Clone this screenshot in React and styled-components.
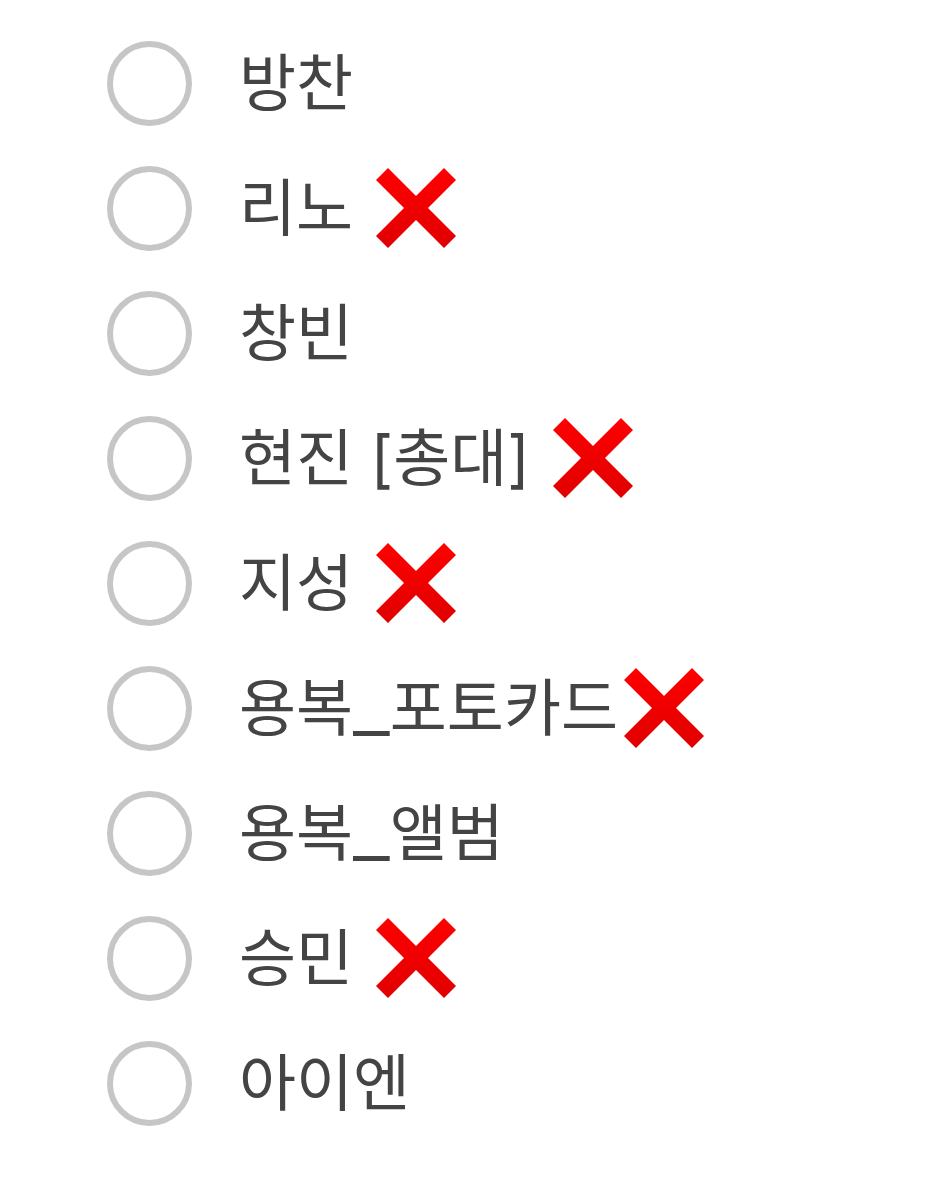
import React, { useState } from 'react';
import styled, { createGlobalStyle } from 'styled-components';

const GlobalStyle = createGlobalStyle`
  body {
    margin: 0;
    background-color: #fff;
  }
`;

const StyledForm = styled.form`
  padding: 21px 24px 21px 107px;
  font-family: Inter, 'Noto Sans CJK KR', sans-serif;

  fieldset {
    margin: 0;
    padding: 0;
    border: 0;
  }
`;

const Option = styled.label`
  display: flex;
  align-items: center;
  height: 125px;
  color: #444;
  font-size: 62px;
  line-height: 84px;
  white-space: nowrap;
  cursor: pointer;
`;

const Underscore = styled.span`
  font-size: 82px;
  font-weight: 300;
  line-height: 0;
`;

const Radio = styled.input`
  appearance: none;
  flex: none;
  box-sizing: border-box;
  width: 85px;
  height: 85px;
  margin: 0 47px 0 0;
  border: 6px solid #c6c6c6;
  border-radius: 50%;
  background-color: #fff;

  &:checked {
    background: radial-gradient(#673ab7 50%, #fff 52%);
    border-color: #673ab7;
  }
`;

const Mark = styled.svg`
  flex: none;
  width: 82px;
  height: 82px;
  margin-left: ${({ $spaced }) => ($spaced ? '22px' : '5px')};
`;

const members = [
  { id: 'bangchan', name: '방찬' },
  { id: 'leeknow', name: '리노', closed: true, spaced: true },
  { id: 'changbin', name: '창빈' },
  { id: 'hyunjin', name: '현진 [총대]', closed: true, spaced: true },
  { id: 'jisung', name: '지성', closed: true, spaced: true },
  { id: 'yongbok-card', name: '용복', item: '포토카드', closed: true },
  { id: 'yongbok-album', name: '용복', item: '앨범' },
  { id: 'seungmin', name: '승민', closed: true, spaced: true },
  { id: 'in', name: '아이엔' },
];

function CrossMark({ spaced }) {
  return (
    <Mark $spaced={spaced} viewBox="0 0 82 82" aria-hidden="true">
      <defs>
        <linearGradient id="cross" x1="0" y1="0" x2="0" y2="1">
          <stop offset="0" stopColor="#ff0000" />
          <stop offset="1" stopColor="#e00000" />
        </linearGradient>
      </defs>
      <path
        fill="url(#cross)"
        d="M13 0 41 28 69 0 81 12 53 40 81 68 69 80 41 52 13 80 1 68 29 40 1 12Z"
      />
    </Mark>
  );
}

export default function App() {
  const [selected, setSelected] = useState('');

  return (
    <StyledForm>
      <GlobalStyle />
      <fieldset>
        {members.map(({
          id, name, item, closed, spaced,
        }) => (
          <Option key={id} htmlFor={id}>
            <Radio
              type="radio"
              name="member"
              id={id}
              value={id}
              checked={selected === id}
              onChange={(e) => setSelected(e.target.value)}
            />
            <span>
              {name}
              {item && <Underscore>_</Underscore>}
              {item}
            </span>
            {closed && <CrossMark spaced={spaced} />}
          </Option>
        ))}
      </fieldset>
    </StyledForm>
  );
}
